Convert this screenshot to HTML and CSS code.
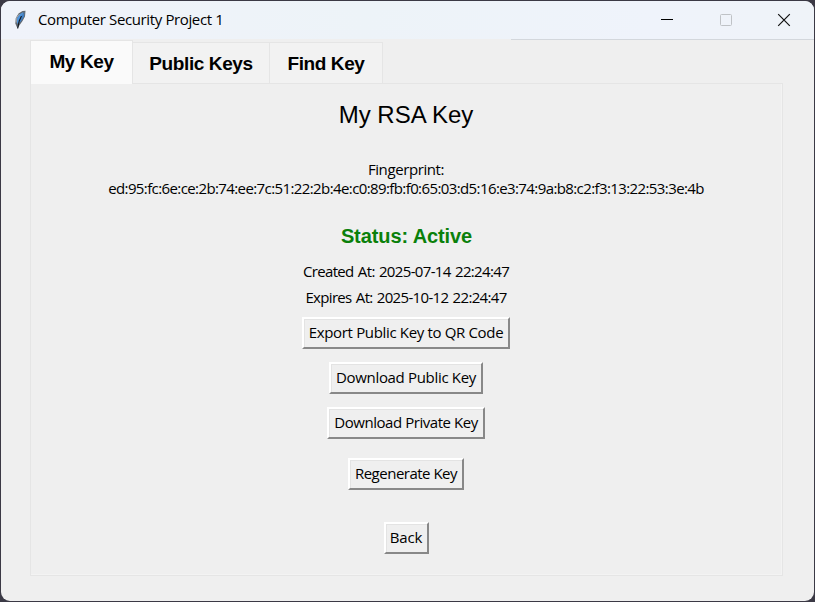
FILE: index.html
```html
<!DOCTYPE html>
<html lang="en">
<head>
<meta charset="utf-8">
<title>Computer Security Project 1</title>
<link rel="stylesheet" href="styles.css">
</head>
<body>
<main class="window">
  <header class="titlebar">
    <svg class="feather" width="14" height="20" viewBox="0 0 14 20">
      <path d="M3.5 18.5 1.3 13.5 1.8 8 4.5 3.5 8.5 1 11.5.8 11 6.5 8.5 11 5 16Z" fill="#62686f"/>
      <path d="M3 14 3 8 6 4 9.5 2 8 7 5 12Z" fill="#4f94dc"/>
      <path d="M10.5 2 10 6.5 7.2 11 4.8 14 6.5 8Z" fill="#3f7fc6"/>
      <path d="M7.5 6 5.2 11 3.7 18.5" fill="none" stroke="#111820" stroke-width="1.1"/>
      <path d="M2.2 12.5 2.4 8 5.5 4" fill="none" stroke="#a9adb2" stroke-width=".9"/>
    </svg>
    <span class="caption">Computer Security Project 1</span>
    <div class="controls">
      <svg width="14" height="14" viewBox="0 0 14 14"><path d="M1 6.5H13" stroke="#000"/></svg>
      <svg width="14" height="14" viewBox="0 0 14 14"><rect x="1.5" y="1.5" width="11" height="11" rx="1" fill="none" stroke="#bfc2c6"/></svg>
      <svg width="14" height="14" viewBox="0 0 14 14"><path d="M1.2 1.2 12.8 12.8M12.8 1.2 1.2 12.8" stroke="#111" stroke-width="1.2"/></svg>
    </div>
  </header>
  <nav class="tabs">
    <div class="tab tab-active"><span>My Key</span></div>
    <div class="tab tab-public"><span>Public Keys</span></div>
    <div class="tab tab-find"><span>Find Key</span></div>
  </nav>
  <section class="panel">
    <h1>My RSA Key</h1>
    <p class="label fp-label">Fingerprint:</p>
    <p class="label fp">ed:95:fc:6e:ce:2b:74:ee:7c:51:22:2b:4e:c0:89:fb:f0:65:03:d5:16:e3:74:9a:b8:c2:f3:13:22:53:3e:4b</p>
    <p class="status">Status: Active</p>
    <p class="label created">Created At: 2025-07-14 22:24:47</p>
    <p class="label expires">Expires At: 2025-10-12 22:24:47</p>
    <button class="export">Export Public Key to QR Code</button>
    <button class="public">Download Public Key</button>
    <button class="private">Download Private Key</button>
    <button class="regen">Regenerate Key</button>
    <button class="back">Back</button>
  </section>
</main>
</body>
</html>
```
FILE: styles.css
```css
* { box-sizing: border-box; }
body { margin: 0; width: 815px; height: 602px; padding: 1px; background: #3b3945; overflow: hidden; font-family: "Open Sans", "Noto Sans", sans-serif; color: #000; }
.window { width: 813px; height: 600px; background: #efefef; border-radius: 9px; overflow: hidden; }
.titlebar { display: flex; align-items: center; height: 39px; padding-left: 13px; background: linear-gradient(90deg, #f0f3fa, #edf3f8 45%, #eff3fb 80%, #eff3f8); border-bottom: 1px solid; border-image: linear-gradient(90deg, #efefef 510px, #d3d7dc 510px) 1; }
.feather { margin-right: 10px; }
.caption { padding-bottom: 2px; font-size: 15px; letter-spacing: -.38px; white-space: nowrap; }
.controls { display: flex; gap: 44.5px; margin-left: auto; margin-right: 23px; }
.controls svg { display: block; }
.tabs { display: flex; align-items: flex-end; height: 44px; margin-left: 29px; position: relative; margin-bottom: -1px; }
.tab { display: flex; justify-content: center; align-items: center; height: 42px; padding-top: 2px; border: 1px solid #e5e5e5; border-left: 0; background: #f2f2f2; font: bold 19px "Liberation Sans", Arial, sans-serif; letter-spacing: -.4px; white-space: nowrap; }
.tab-active { width: 103px; height: 44px; padding: 0 0 1px; border-left: 1px solid #e5e5e5; border-bottom: 0; background: #fafafa; }
.tab-public { width: 137px; }
.tab-find { width: 113px; }
.panel { display: flex; flex-direction: column; align-items: center; width: 753px; height: 493px; margin-left: 29px; padding-right: 1px; border: 1px solid #e5e5e5; box-shadow: inset -1px -1px #f3f3f3; }
h1, p { margin: 0; white-space: nowrap; }
h1 { margin-top: 17px; font: 24px/28px "Liberation Sans", Arial, sans-serif; }
.label { font-size: 15px; line-height: 19px; }
.fp-label { margin-top: 31px; letter-spacing: -.4px; }
.fp { letter-spacing: -.6px; }
.status { margin-top: 26px; padding-left: 1px; font: bold 20px/24px "Liberation Sans", Arial, sans-serif; letter-spacing: -.1px; color: #0a800a; }
.created { margin-top: 14px; letter-spacing: -.65px; word-spacing: 1px; }
.expires { margin-top: 7px; letter-spacing: -.67px; word-spacing: 1px; }
button { display: flex; align-items: center; justify-content: center; height: 32px; padding: 0 0 3px; border: 2px solid; border-color: #fff #888 #888 #fff; border-radius: 0; background: #efefef; box-shadow: inset 1px 1px #e3e3e3; font: 15px "Open Sans", "Noto Sans", sans-serif; white-space: nowrap; color: #000; }
.export { width: 208px; margin-top: 10px; letter-spacing: -.34px; }
.public { width: 154px; margin-top: 13px; letter-spacing: -.32px; }
.private { width: 158px; margin-top: 13px; letter-spacing: -.45px; }
.regen { width: 116px; margin-top: 19px; letter-spacing: -.5px; }
.back { width: 45px; margin-top: 32px; letter-spacing: -.2px; }
```
